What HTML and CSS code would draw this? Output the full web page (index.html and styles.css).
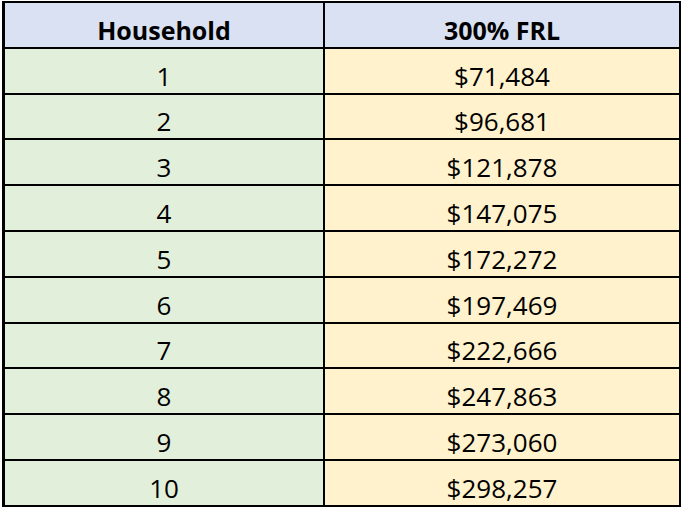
FILE: index.html
```html
<!DOCTYPE html>
<html lang="en">
<head>
<meta charset="utf-8">
<title>300% FRL by Household</title>
<link rel="stylesheet" href="styles.css">
</head>
<body>
<div class="table">
  <div class="cell head">Household</div>
  <div class="cell head">300% FRL</div>
  <div class="cell hh">1</div><div class="cell frl">$71,484</div>
  <div class="cell hh">2</div><div class="cell frl">$96,681</div>
  <div class="cell hh">3</div><div class="cell frl">$121,878</div>
  <div class="cell hh">4</div><div class="cell frl">$147,075</div>
  <div class="cell hh">5</div><div class="cell frl">$172,272</div>
  <div class="cell hh">6</div><div class="cell frl">$197,469</div>
  <div class="cell hh">7</div><div class="cell frl">$222,666</div>
  <div class="cell hh">8</div><div class="cell frl">$247,863</div>
  <div class="cell hh">9</div><div class="cell frl">$273,060</div>
  <div class="cell hh">10</div><div class="cell frl">$298,257</div>
</div>
</body>
</html>
```
FILE: styles.css
```css
html, body {
  margin: 0;
  padding: 0;
  background: #ffffff;
}
body {
  font-family: "Open Sans", "Noto Sans", sans-serif;
  color: #000000;
}
.table {
  margin: 1px 0 0 2px;
  width: 679px;
  box-sizing: border-box;
  padding: 2px 2px 2px 3px;
  background: #000000;
  display: grid;
  grid-template-columns: 318px 354px;
  grid-auto-rows: 43.8px;
  gap: 2px;
}
.cell {
  display: flex;
  align-items: flex-end;
  justify-content: center;
  font-size: 26px;
  line-height: 30px;
  padding-bottom: 2px;
  box-sizing: border-box;
}
.head {
  background: #d9e1f2;
  font-weight: 700;
  font-size: 25px;
}
.hh {
  background: #e2efda;
}
.frl {
  background: #fff2cc;
}
```
